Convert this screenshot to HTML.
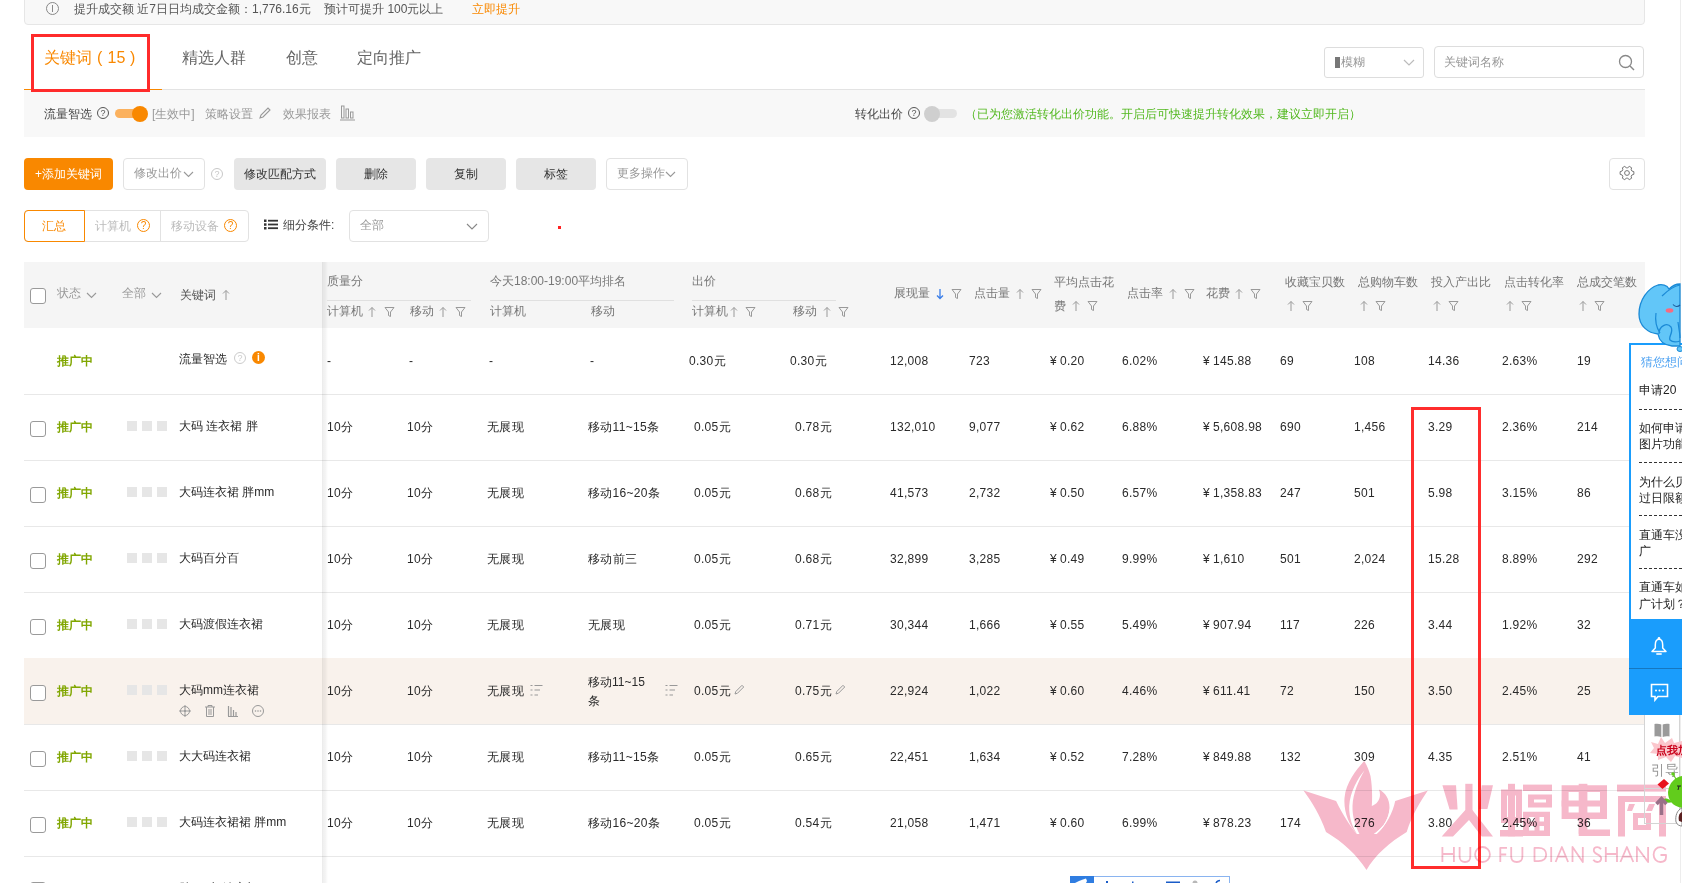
<!DOCTYPE html><html><head><meta charset="utf-8"><style>
*{margin:0;padding:0;box-sizing:border-box}
html,body{width:1682px;height:883px;overflow:hidden;background:#fff;font-family:"Liberation Sans",sans-serif;font-size:12px;color:#2a2a2a}
.t{position:absolute;white-space:nowrap;line-height:16px}
.b{position:absolute}
.g{color:#999}
.hg{color:#777}
.d{color:#666}
.or{color:#f98800}
.st{color:#80a600;font-weight:bold}
.chk{position:absolute;width:16px;height:16px;border:1px solid #9a9a9a;border-radius:3px;background:#fff}
.sq{position:absolute;width:10px;height:10px;background:#e6e6e6}
.hl{position:absolute;height:1px;background:#e8e8e8}
</style></head><body>

<div class="b" style="left:24px;top:-6px;width:1621px;height:31px;background:#f8f8f8;border:1px solid #e6e6e6;border-radius:4px"></div>
<div class="b" style="left:46px;top:2px;width:13px;height:13px;border:1px solid #888;border-radius:50%"></div>
<div class="b" style="left:52px;top:5px;width:1px;height:7px;background:#888"></div>
<div class="t " style="left:74px;top:1px;color:#555">提升成交额 近7日日均成交金额：1,776.16元&nbsp;&nbsp;&nbsp; 预计可提升 100元以上</div>
<div class="t or" style="left:472px;top:1px;">立即提升</div>
<div class="hl" style="left:24px;top:89px;width:1621px;background:#e3e3e3"></div>
<div class="b" style="left:24px;top:89px;width:138px;height:1px;background:#f98800"></div>
<div class="t or" style="left:44px;top:49px;font-size:16px;line-height:20px;top:48px">关键词</div>
<div class="t or" style="left:97px;top:49px;font-size:16px;line-height:20px;top:48px">(</div>
<div class="t or" style="left:107.5px;top:49px;font-size:16px;line-height:20px;top:48px">15</div>
<div class="t or" style="left:130px;top:49px;font-size:16px;line-height:20px;top:48px">)</div>
<div class="t d" style="left:182px;top:49px;font-size:16px;line-height:20px;top:48px">精选人群</div>
<div class="t d" style="left:286px;top:49px;font-size:16px;line-height:20px;top:48px">创意</div>
<div class="t d" style="left:357px;top:49px;font-size:16px;line-height:20px;top:48px">定向推广</div>
<div class="b" style="left:31px;top:34px;width:119px;height:58px;border:3px solid #ff2b2b;z-index:5"></div>
<div class="b" style="left:1324px;top:47px;width:100px;height:31px;border:1px solid #ddd;border-radius:3px;background:#fff"></div>
<div class="b" style="left:1335px;top:57px;width:5px;height:11px;background:#777"></div>
<div class="t g" style="left:1341px;top:54px;">模糊</div>
<svg class="b" style="left:1403px;top:59px" width="12" height="7" viewBox="0 0 12 7"><path d="M1 1 L6 6 L11 1" fill="none" stroke="#bbb" stroke-width="1.2"/></svg>
<div class="b" style="left:1434px;top:46px;width:210px;height:32px;border:1px solid #ddd;border-radius:4px;background:#fff"></div>
<div class="t g" style="left:1444px;top:54px;">关键词名称</div>
<svg class="b" style="left:1618px;top:54px" width="18" height="18" viewBox="0 0 18 18"><circle cx="7.5" cy="7.5" r="6" fill="none" stroke="#888" stroke-width="1.3"/><path d="M12 12 L16 16" stroke="#888" stroke-width="1.5"/></svg>
<div class="b" style="left:24px;top:90px;width:1621px;height:47px;background:#f8f8f8"></div>
<div class="t " style="left:44px;top:106px;color:#444">流量智选</div>
<div class="b" style="left:97px;top:107px;width:12px;height:12px;border:1px solid #555;border-radius:50%;font-size:9px;line-height:10px;text-align:center;color:#555">?</div>
<div class="b" style="left:115px;top:109px;width:26px;height:9px;background:#fbb15e;border-radius:5px"></div>
<div class="b" style="left:132px;top:106px;width:16px;height:16px;background:#f98800;border-radius:50%"></div>
<div class="t g" style="left:152px;top:106px;">[生效中]</div>
<div class="t g" style="left:205px;top:106px;">策略设置</div>
<svg class="b" style="left:258px;top:106px" width="14" height="14" viewBox="0 0 14 14"><path d="M2 12 L3 9 L10 2 L12 4 L5 11 Z" fill="none" stroke="#999" stroke-width="1.1"/></svg>
<div class="t g" style="left:283px;top:106px;">效果报表</div>
<svg class="b" style="left:340px;top:105px" width="16" height="16" viewBox="0 0 16 16"><rect x="1.5" y="1" width="2.5" height="12" fill="none" stroke="#999" stroke-width="1"/><rect x="6" y="4" width="2.5" height="9" fill="none" stroke="#999" stroke-width="1"/><rect x="10.5" y="7" width="2.5" height="6" fill="none" stroke="#999" stroke-width="1"/><path d="M0 15 H15" stroke="#999"/></svg>
<div class="t " style="left:855px;top:106px;color:#444">转化出价</div>
<div class="b" style="left:908px;top:107px;width:12px;height:12px;border:1px solid #555;border-radius:50%;font-size:9px;line-height:10px;text-align:center;color:#555">?</div>
<div class="b" style="left:926px;top:109px;width:31px;height:9px;background:#e3e3e3;border-radius:5px"></div>
<div class="b" style="left:924px;top:106px;width:16px;height:16px;background:#cfcfcf;border-radius:50%"></div>
<div class="t " style="left:965px;top:106px;color:#52b81f">（已为您激活转化出价功能。开启后可快速提升转化效果，建议立即开启）</div>
<div class="b" style="left:24px;top:158px;width:89px;height:32px;background:#f98800;border-radius:4px;color:#fff;text-align:center;line-height:32px">+添加关键词</div>
<div class="b" style="left:123px;top:158px;width:82px;height:32px;border:1px solid #e2e2e2;border-radius:4px;background:#fff"></div>
<div class="t g" style="left:134px;top:165px;">修改出价</div>
<svg class="b" style="left:183px;top:171px" width="11" height="7" viewBox="0 0 11 7"><path d="M1 1 L5.5 5.5 L10 1" fill="none" stroke="#999" stroke-width="1.1"/></svg>
<div class="b" style="left:211px;top:168px;width:12px;height:12px;border:1px solid #c8c8c8;border-radius:50%;font-size:9px;line-height:10px;text-align:center;color:#c8c8c8">?</div>
<div class="b" style="left:234px;top:158px;width:92px;height:32px;background:#e6e6e6;border-radius:4px;text-align:center;line-height:32px;color:#333">修改匹配方式</div>
<div class="b" style="left:336px;top:158px;width:80px;height:32px;background:#e6e6e6;border-radius:4px;text-align:center;line-height:32px;color:#333">删除</div>
<div class="b" style="left:426px;top:158px;width:80px;height:32px;background:#e6e6e6;border-radius:4px;text-align:center;line-height:32px;color:#333">复制</div>
<div class="b" style="left:516px;top:158px;width:80px;height:32px;background:#e6e6e6;border-radius:4px;text-align:center;line-height:32px;color:#333">标签</div>
<div class="b" style="left:606px;top:158px;width:82px;height:32px;border:1px solid #e2e2e2;border-radius:4px;background:#fff"></div>
<div class="t g" style="left:617px;top:165px;">更多操作</div>
<svg class="b" style="left:665px;top:171px" width="11" height="7" viewBox="0 0 11 7"><path d="M1 1 L5.5 5.5 L10 1" fill="none" stroke="#999" stroke-width="1.1"/></svg>
<div class="b" style="left:1609px;top:158px;width:36px;height:32px;border:1px solid #e2e2e2;border-radius:4px;background:#fff"></div>
<svg class="b" style="left:1619px;top:164.6px" width="16" height="16" viewBox="0 0 16 16"><path d="M12.91 6.01 L14.87 6.66 L14.87 9.34 L12.91 9.99 L12.18 11.26 L12.59 13.28 L10.28 14.62 L8.74 13.25 L7.26 13.25 L5.72 14.62 L3.41 13.28 L3.82 11.26 L3.09 9.99 L1.13 9.34 L1.13 6.66 L3.09 6.01 L3.82 4.74 L3.41 2.72 L5.72 1.38 L7.26 2.75 L8.74 2.75 L10.28 1.38 L12.59 2.72 L12.18 4.74 Z" fill="none" stroke="#777" stroke-width="1" stroke-linejoin="round"/><circle cx="8" cy="8" r="2.4" fill="none" stroke="#777" stroke-width="1"/></svg>
<div class="b" style="left:24px;top:210px;width:225px;height:32px;border:1px solid #e2e2e2;border-radius:4px;background:#fff"></div>
<div class="b" style="left:160px;top:211px;width:1px;height:30px;background:#e2e2e2"></div>
<div class="b" style="left:24px;top:210px;width:61px;height:32px;border:1px solid #f98800;border-radius:4px 0 0 4px"></div>
<div class="t or" style="left:42px;top:218px;">汇总</div>
<div class="t " style="left:95px;top:218px;color:#bbb">计算机</div>
<div class="b" style="left:137px;top:219px;width:13px;height:13px;border:1px solid #f98800;border-radius:50%;font-size:10px;line-height:11px;text-align:center;color:#f98800">?</div>
<div class="t " style="left:171px;top:218px;color:#bbb">移动设备</div>
<div class="b" style="left:224px;top:219px;width:13px;height:13px;border:1px solid #f98800;border-radius:50%;font-size:10px;line-height:11px;text-align:center;color:#f98800">?</div>
<svg class="b" style="left:264px;top:219px" width="14" height="11" viewBox="0 0 14 11"><rect x="0" y="0.5" width="2.5" height="2.5" fill="#333"/><rect x="0" y="4.3" width="2.5" height="2.5" fill="#333"/><rect x="0" y="8" width="2.5" height="2.5" fill="#333"/><rect x="4" y="0.8" width="10" height="1.8" fill="#333"/><rect x="4" y="4.6" width="10" height="1.8" fill="#333"/><rect x="4" y="8.3" width="10" height="1.8" fill="#333"/></svg>
<div class="t " style="left:283px;top:217px;color:#444">细分条件:</div>
<div class="b" style="left:349px;top:210px;width:140px;height:32px;border:1px solid #e2e2e2;border-radius:4px;background:#fff"></div>
<div class="t g" style="left:360px;top:217px;">全部</div>
<svg class="b" style="left:466px;top:223px" width="12" height="7" viewBox="0 0 12 7"><path d="M1 1 L6 6 L11 1" fill="none" stroke="#888" stroke-width="1.1"/></svg>
<div class="b" style="left:558px;top:226px;width:3px;height:3px;background:#ff2020"></div>
<div class="b" style="left:24px;top:262px;width:1621px;height:66px;background:#f5f5f5"></div>
<div class="chk" style="left:30px;top:288px"></div>
<div class="t g" style="left:57px;top:285px;">状态</div>
<svg class="b" style="left:86px;top:292px" width="11" height="7" viewBox="0 0 11 7"><path d="M1 1 L5.5 5.5 L10 1" fill="none" stroke="#999" stroke-width="1.1"/></svg>
<div class="t g" style="left:122px;top:285px;">全部</div>
<svg class="b" style="left:151px;top:292px" width="11" height="7" viewBox="0 0 11 7"><path d="M1 1 L5.5 5.5 L10 1" fill="none" stroke="#999" stroke-width="1.1"/></svg>
<div class="t " style="left:180px;top:287px;color:#555">关键词</div>
<svg class="b" style="left:222px;top:289px" width="8" height="12" viewBox="0 0 8 12"><path d="M4 11 V1.5 M1 4.5 L4 1.5 L7 4.5" fill="none" stroke="#999" stroke-width="1"/></svg>
<div class="t hg" style="left:327px;top:273px;">质量分</div>
<div class="hl" style="left:327px;top:300px;width:144px;background:#e0e0e0"></div>
<div class="t hg" style="left:490px;top:273px;">今天18:00-19:00平均排名</div>
<div class="hl" style="left:490px;top:300px;width:184px;background:#e0e0e0"></div>
<div class="t hg" style="left:692px;top:273px;">出价</div>
<div class="hl" style="left:692px;top:300px;width:144px;background:#e0e0e0"></div>
<div class="t hg" style="left:327px;top:303px;">计算机</div>
<svg class="b" style="left:368px;top:306px" width="8" height="12" viewBox="0 0 8 12"><path d="M4 11 V1.5 M1 4.5 L4 1.5 L7 4.5" fill="none" stroke="#999" stroke-width="1"/></svg>
<svg class="b" style="left:384px;top:306px" width="11" height="12" viewBox="0 0 11 12"><path d="M1 1.5 H10 L6.5 6 V10.5 L4.5 9.5 V6 Z" fill="none" stroke="#999" stroke-width="1"/></svg>
<div class="t hg" style="left:410px;top:303px;">移动</div>
<svg class="b" style="left:439px;top:306px" width="8" height="12" viewBox="0 0 8 12"><path d="M4 11 V1.5 M1 4.5 L4 1.5 L7 4.5" fill="none" stroke="#999" stroke-width="1"/></svg>
<svg class="b" style="left:455px;top:306px" width="11" height="12" viewBox="0 0 11 12"><path d="M1 1.5 H10 L6.5 6 V10.5 L4.5 9.5 V6 Z" fill="none" stroke="#999" stroke-width="1"/></svg>
<div class="t hg" style="left:490px;top:303px;">计算机</div>
<div class="t hg" style="left:591px;top:303px;">移动</div>
<div class="t hg" style="left:692px;top:303px;">计算机</div>
<svg class="b" style="left:730px;top:306px" width="8" height="12" viewBox="0 0 8 12"><path d="M4 11 V1.5 M1 4.5 L4 1.5 L7 4.5" fill="none" stroke="#999" stroke-width="1"/></svg>
<svg class="b" style="left:745px;top:306px" width="11" height="12" viewBox="0 0 11 12"><path d="M1 1.5 H10 L6.5 6 V10.5 L4.5 9.5 V6 Z" fill="none" stroke="#999" stroke-width="1"/></svg>
<div class="t hg" style="left:793px;top:303px;">移动</div>
<svg class="b" style="left:823px;top:306px" width="8" height="12" viewBox="0 0 8 12"><path d="M4 11 V1.5 M1 4.5 L4 1.5 L7 4.5" fill="none" stroke="#999" stroke-width="1"/></svg>
<svg class="b" style="left:838px;top:306px" width="11" height="12" viewBox="0 0 11 12"><path d="M1 1.5 H10 L6.5 6 V10.5 L4.5 9.5 V6 Z" fill="none" stroke="#999" stroke-width="1"/></svg>
<div class="t hg" style="left:894px;top:285px;">展现量</div>
<svg class="b" style="left:936px;top:288px" width="8" height="12" viewBox="0 0 8 12"><path d="M4 1 V10.5 M1 7.5 L4 10.5 L7 7.5" fill="none" stroke="#3a7ee8" stroke-width="1.3"/></svg>
<svg class="b" style="left:951px;top:288px" width="11" height="12" viewBox="0 0 11 12"><path d="M1 1.5 H10 L6.5 6 V10.5 L4.5 9.5 V6 Z" fill="none" stroke="#999" stroke-width="1"/></svg>
<div class="t hg" style="left:974px;top:285px;">点击量</div>
<svg class="b" style="left:1016px;top:288px" width="8" height="12" viewBox="0 0 8 12"><path d="M4 11 V1.5 M1 4.5 L4 1.5 L7 4.5" fill="none" stroke="#999" stroke-width="1"/></svg>
<svg class="b" style="left:1031px;top:288px" width="11" height="12" viewBox="0 0 11 12"><path d="M1 1.5 H10 L6.5 6 V10.5 L4.5 9.5 V6 Z" fill="none" stroke="#999" stroke-width="1"/></svg>
<div class="t hg" style="left:1054px;top:274px;">平均点击花</div>
<div class="t hg" style="left:1054px;top:298px;">费</div>
<svg class="b" style="left:1072px;top:300px" width="8" height="12" viewBox="0 0 8 12"><path d="M4 11 V1.5 M1 4.5 L4 1.5 L7 4.5" fill="none" stroke="#999" stroke-width="1"/></svg>
<svg class="b" style="left:1087px;top:300px" width="11" height="12" viewBox="0 0 11 12"><path d="M1 1.5 H10 L6.5 6 V10.5 L4.5 9.5 V6 Z" fill="none" stroke="#999" stroke-width="1"/></svg>
<div class="t hg" style="left:1127px;top:285px;">点击率</div>
<svg class="b" style="left:1169px;top:288px" width="8" height="12" viewBox="0 0 8 12"><path d="M4 11 V1.5 M1 4.5 L4 1.5 L7 4.5" fill="none" stroke="#999" stroke-width="1"/></svg>
<svg class="b" style="left:1184px;top:288px" width="11" height="12" viewBox="0 0 11 12"><path d="M1 1.5 H10 L6.5 6 V10.5 L4.5 9.5 V6 Z" fill="none" stroke="#999" stroke-width="1"/></svg>
<div class="t hg" style="left:1206px;top:285px;">花费</div>
<svg class="b" style="left:1235px;top:288px" width="8" height="12" viewBox="0 0 8 12"><path d="M4 11 V1.5 M1 4.5 L4 1.5 L7 4.5" fill="none" stroke="#999" stroke-width="1"/></svg>
<svg class="b" style="left:1250px;top:288px" width="11" height="12" viewBox="0 0 11 12"><path d="M1 1.5 H10 L6.5 6 V10.5 L4.5 9.5 V6 Z" fill="none" stroke="#999" stroke-width="1"/></svg>
<div class="t hg" style="left:1285px;top:274px;">收藏宝贝数</div>
<svg class="b" style="left:1287px;top:300px" width="8" height="12" viewBox="0 0 8 12"><path d="M4 11 V1.5 M1 4.5 L4 1.5 L7 4.5" fill="none" stroke="#999" stroke-width="1"/></svg>
<svg class="b" style="left:1302px;top:300px" width="11" height="12" viewBox="0 0 11 12"><path d="M1 1.5 H10 L6.5 6 V10.5 L4.5 9.5 V6 Z" fill="none" stroke="#999" stroke-width="1"/></svg>
<div class="t hg" style="left:1358px;top:274px;">总购物车数</div>
<svg class="b" style="left:1360px;top:300px" width="8" height="12" viewBox="0 0 8 12"><path d="M4 11 V1.5 M1 4.5 L4 1.5 L7 4.5" fill="none" stroke="#999" stroke-width="1"/></svg>
<svg class="b" style="left:1375px;top:300px" width="11" height="12" viewBox="0 0 11 12"><path d="M1 1.5 H10 L6.5 6 V10.5 L4.5 9.5 V6 Z" fill="none" stroke="#999" stroke-width="1"/></svg>
<div class="t hg" style="left:1431px;top:274px;">投入产出比</div>
<svg class="b" style="left:1433px;top:300px" width="8" height="12" viewBox="0 0 8 12"><path d="M4 11 V1.5 M1 4.5 L4 1.5 L7 4.5" fill="none" stroke="#999" stroke-width="1"/></svg>
<svg class="b" style="left:1448px;top:300px" width="11" height="12" viewBox="0 0 11 12"><path d="M1 1.5 H10 L6.5 6 V10.5 L4.5 9.5 V6 Z" fill="none" stroke="#999" stroke-width="1"/></svg>
<div class="t hg" style="left:1504px;top:274px;">点击转化率</div>
<svg class="b" style="left:1506px;top:300px" width="8" height="12" viewBox="0 0 8 12"><path d="M4 11 V1.5 M1 4.5 L4 1.5 L7 4.5" fill="none" stroke="#999" stroke-width="1"/></svg>
<svg class="b" style="left:1521px;top:300px" width="11" height="12" viewBox="0 0 11 12"><path d="M1 1.5 H10 L6.5 6 V10.5 L4.5 9.5 V6 Z" fill="none" stroke="#999" stroke-width="1"/></svg>
<div class="t hg" style="left:1577px;top:274px;">总成交笔数</div>
<svg class="b" style="left:1579px;top:300px" width="8" height="12" viewBox="0 0 8 12"><path d="M4 11 V1.5 M1 4.5 L4 1.5 L7 4.5" fill="none" stroke="#999" stroke-width="1"/></svg>
<svg class="b" style="left:1594px;top:300px" width="11" height="12" viewBox="0 0 11 12"><path d="M1 1.5 H10 L6.5 6 V10.5 L4.5 9.5 V6 Z" fill="none" stroke="#999" stroke-width="1"/></svg>
<div class="hl" style="left:24px;top:394px;width:1621px"></div>
<div class="t st" style="left:57px;top:353px;">推广中</div>
<div class="t " style="left:179px;top:351px;">流量智选</div>
<div class="b" style="left:234px;top:352px;width:12px;height:12px;border:1px solid #ccc;border-radius:50%;font-size:9px;line-height:10px;text-align:center;color:#ccc">?</div>
<div class="b" style="left:252px;top:351px;width:13px;height:13px;background:#f98800;border-radius:50%;color:#fff;font-size:10px;line-height:13px;text-align:center;font-weight:bold">i</div>
<div class="t " style="left:327px;top:353px;letter-spacing:0.3px">-</div>
<div class="t " style="left:409px;top:353px;letter-spacing:0.3px">-</div>
<div class="t " style="left:489px;top:353px;letter-spacing:0.3px">-</div>
<div class="t " style="left:590px;top:353px;letter-spacing:0.3px">-</div>
<div class="t " style="left:689px;top:353px;letter-spacing:0.3px">0.30元</div>
<div class="t " style="left:790px;top:353px;letter-spacing:0.3px">0.30元</div>
<div class="t " style="left:890px;top:353px;letter-spacing:0.3px">12,008</div>
<div class="t " style="left:969px;top:353px;letter-spacing:0.3px">723</div>
<div class="t " style="left:1050px;top:353px;letter-spacing:0.3px"><span style="margin-right:3px">¥</span>0.20</div>
<div class="t " style="left:1122px;top:353px;letter-spacing:0.3px">6.02%</div>
<div class="t " style="left:1203px;top:353px;letter-spacing:0.3px"><span style="margin-right:3px">¥</span>145.88</div>
<div class="t " style="left:1280px;top:353px;letter-spacing:0.3px">69</div>
<div class="t " style="left:1354px;top:353px;letter-spacing:0.3px">108</div>
<div class="t " style="left:1428px;top:353px;letter-spacing:0.3px">14.36</div>
<div class="t " style="left:1502px;top:353px;letter-spacing:0.3px">2.63%</div>
<div class="t " style="left:1577px;top:353px;letter-spacing:0.3px">19</div>
<div class="hl" style="left:24px;top:460px;width:1621px"></div>
<div class="chk" style="left:30px;top:421px"></div>
<div class="t st" style="left:57px;top:419px;">推广中</div>
<div class="sq" style="left:127px;top:421px"></div>
<div class="sq" style="left:142px;top:421px"></div>
<div class="sq" style="left:157px;top:421px"></div>
<div class="t " style="left:179px;top:418px;">大码 连衣裙 胖</div>
<div class="t " style="left:327px;top:419px;letter-spacing:0.3px">10分</div>
<div class="t " style="left:407px;top:419px;letter-spacing:0.3px">10分</div>
<div class="t " style="left:487px;top:419px;letter-spacing:0.3px">无展现</div>
<div class="t " style="left:588px;top:419px;letter-spacing:0.3px">移动11~15条</div>
<div class="t " style="left:694px;top:419px;letter-spacing:0.3px">0.05元</div>
<div class="t " style="left:795px;top:419px;letter-spacing:0.3px">0.78元</div>
<div class="t " style="left:890px;top:419px;letter-spacing:0.3px">132,010</div>
<div class="t " style="left:969px;top:419px;letter-spacing:0.3px">9,077</div>
<div class="t " style="left:1050px;top:419px;letter-spacing:0.3px"><span style="margin-right:3px">¥</span>0.62</div>
<div class="t " style="left:1122px;top:419px;letter-spacing:0.3px">6.88%</div>
<div class="t " style="left:1203px;top:419px;letter-spacing:0.3px"><span style="margin-right:3px">¥</span>5,608.98</div>
<div class="t " style="left:1280px;top:419px;letter-spacing:0.3px">690</div>
<div class="t " style="left:1354px;top:419px;letter-spacing:0.3px">1,456</div>
<div class="t " style="left:1428px;top:419px;letter-spacing:0.3px">3.29</div>
<div class="t " style="left:1502px;top:419px;letter-spacing:0.3px">2.36%</div>
<div class="t " style="left:1577px;top:419px;letter-spacing:0.3px">214</div>
<div class="hl" style="left:24px;top:526px;width:1621px"></div>
<div class="chk" style="left:30px;top:487px"></div>
<div class="t st" style="left:57px;top:485px;">推广中</div>
<div class="sq" style="left:127px;top:487px"></div>
<div class="sq" style="left:142px;top:487px"></div>
<div class="sq" style="left:157px;top:487px"></div>
<div class="t " style="left:179px;top:484px;">大码连衣裙 胖mm</div>
<div class="t " style="left:327px;top:485px;letter-spacing:0.3px">10分</div>
<div class="t " style="left:407px;top:485px;letter-spacing:0.3px">10分</div>
<div class="t " style="left:487px;top:485px;letter-spacing:0.3px">无展现</div>
<div class="t " style="left:588px;top:485px;letter-spacing:0.3px">移动16~20条</div>
<div class="t " style="left:694px;top:485px;letter-spacing:0.3px">0.05元</div>
<div class="t " style="left:795px;top:485px;letter-spacing:0.3px">0.68元</div>
<div class="t " style="left:890px;top:485px;letter-spacing:0.3px">41,573</div>
<div class="t " style="left:969px;top:485px;letter-spacing:0.3px">2,732</div>
<div class="t " style="left:1050px;top:485px;letter-spacing:0.3px"><span style="margin-right:3px">¥</span>0.50</div>
<div class="t " style="left:1122px;top:485px;letter-spacing:0.3px">6.57%</div>
<div class="t " style="left:1203px;top:485px;letter-spacing:0.3px"><span style="margin-right:3px">¥</span>1,358.83</div>
<div class="t " style="left:1280px;top:485px;letter-spacing:0.3px">247</div>
<div class="t " style="left:1354px;top:485px;letter-spacing:0.3px">501</div>
<div class="t " style="left:1428px;top:485px;letter-spacing:0.3px">5.98</div>
<div class="t " style="left:1502px;top:485px;letter-spacing:0.3px">3.15%</div>
<div class="t " style="left:1577px;top:485px;letter-spacing:0.3px">86</div>
<div class="hl" style="left:24px;top:592px;width:1621px"></div>
<div class="chk" style="left:30px;top:553px"></div>
<div class="t st" style="left:57px;top:551px;">推广中</div>
<div class="sq" style="left:127px;top:553px"></div>
<div class="sq" style="left:142px;top:553px"></div>
<div class="sq" style="left:157px;top:553px"></div>
<div class="t " style="left:179px;top:550px;">大码百分百</div>
<div class="t " style="left:327px;top:551px;letter-spacing:0.3px">10分</div>
<div class="t " style="left:407px;top:551px;letter-spacing:0.3px">10分</div>
<div class="t " style="left:487px;top:551px;letter-spacing:0.3px">无展现</div>
<div class="t " style="left:588px;top:551px;letter-spacing:0.3px">移动前三</div>
<div class="t " style="left:694px;top:551px;letter-spacing:0.3px">0.05元</div>
<div class="t " style="left:795px;top:551px;letter-spacing:0.3px">0.68元</div>
<div class="t " style="left:890px;top:551px;letter-spacing:0.3px">32,899</div>
<div class="t " style="left:969px;top:551px;letter-spacing:0.3px">3,285</div>
<div class="t " style="left:1050px;top:551px;letter-spacing:0.3px"><span style="margin-right:3px">¥</span>0.49</div>
<div class="t " style="left:1122px;top:551px;letter-spacing:0.3px">9.99%</div>
<div class="t " style="left:1203px;top:551px;letter-spacing:0.3px"><span style="margin-right:3px">¥</span>1,610</div>
<div class="t " style="left:1280px;top:551px;letter-spacing:0.3px">501</div>
<div class="t " style="left:1354px;top:551px;letter-spacing:0.3px">2,024</div>
<div class="t " style="left:1428px;top:551px;letter-spacing:0.3px">15.28</div>
<div class="t " style="left:1502px;top:551px;letter-spacing:0.3px">8.89%</div>
<div class="t " style="left:1577px;top:551px;letter-spacing:0.3px">292</div>
<div class="hl" style="left:24px;top:658px;width:1621px"></div>
<div class="chk" style="left:30px;top:619px"></div>
<div class="t st" style="left:57px;top:617px;">推广中</div>
<div class="sq" style="left:127px;top:619px"></div>
<div class="sq" style="left:142px;top:619px"></div>
<div class="sq" style="left:157px;top:619px"></div>
<div class="t " style="left:179px;top:616px;">大码渡假连衣裙</div>
<div class="t " style="left:327px;top:617px;letter-spacing:0.3px">10分</div>
<div class="t " style="left:407px;top:617px;letter-spacing:0.3px">10分</div>
<div class="t " style="left:487px;top:617px;letter-spacing:0.3px">无展现</div>
<div class="t " style="left:588px;top:617px;letter-spacing:0.3px">无展现</div>
<div class="t " style="left:694px;top:617px;letter-spacing:0.3px">0.05元</div>
<div class="t " style="left:795px;top:617px;letter-spacing:0.3px">0.71元</div>
<div class="t " style="left:890px;top:617px;letter-spacing:0.3px">30,344</div>
<div class="t " style="left:969px;top:617px;letter-spacing:0.3px">1,666</div>
<div class="t " style="left:1050px;top:617px;letter-spacing:0.3px"><span style="margin-right:3px">¥</span>0.55</div>
<div class="t " style="left:1122px;top:617px;letter-spacing:0.3px">5.49%</div>
<div class="t " style="left:1203px;top:617px;letter-spacing:0.3px"><span style="margin-right:3px">¥</span>907.94</div>
<div class="t " style="left:1280px;top:617px;letter-spacing:0.3px">117</div>
<div class="t " style="left:1354px;top:617px;letter-spacing:0.3px">226</div>
<div class="t " style="left:1428px;top:617px;letter-spacing:0.3px">3.44</div>
<div class="t " style="left:1502px;top:617px;letter-spacing:0.3px">1.92%</div>
<div class="t " style="left:1577px;top:617px;letter-spacing:0.3px">32</div>
<div class="b" style="left:24px;top:658px;width:1621px;height:66px;background:#f9f2ec"></div>
<div class="hl" style="left:24px;top:724px;width:1621px"></div>
<div class="chk" style="left:30px;top:685px"></div>
<div class="t st" style="left:57px;top:683px;">推广中</div>
<div class="sq" style="left:127px;top:685px"></div>
<div class="sq" style="left:142px;top:685px"></div>
<div class="sq" style="left:157px;top:685px"></div>
<div class="t " style="left:179px;top:682px;">大码mm连衣裙</div>
<div class="t " style="left:327px;top:683px;letter-spacing:0.3px">10分</div>
<div class="t " style="left:407px;top:683px;letter-spacing:0.3px">10分</div>
<div class="t " style="left:487px;top:683px;letter-spacing:0.3px">无展现</div>
<div class="t" style="left:588px;top:673px;line-height:19px">移动11~15<br>条</div>
<div class="t " style="left:694px;top:683px;letter-spacing:0.3px">0.05元</div>
<div class="t " style="left:795px;top:683px;letter-spacing:0.3px">0.75元</div>
<div class="t " style="left:890px;top:683px;letter-spacing:0.3px">22,924</div>
<div class="t " style="left:969px;top:683px;letter-spacing:0.3px">1,022</div>
<div class="t " style="left:1050px;top:683px;letter-spacing:0.3px"><span style="margin-right:3px">¥</span>0.60</div>
<div class="t " style="left:1122px;top:683px;letter-spacing:0.3px">4.46%</div>
<div class="t " style="left:1203px;top:683px;letter-spacing:0.3px"><span style="margin-right:3px">¥</span>611.41</div>
<div class="t " style="left:1280px;top:683px;letter-spacing:0.3px">72</div>
<div class="t " style="left:1354px;top:683px;letter-spacing:0.3px">150</div>
<div class="t " style="left:1428px;top:683px;letter-spacing:0.3px">3.50</div>
<div class="t " style="left:1502px;top:683px;letter-spacing:0.3px">2.45%</div>
<div class="t " style="left:1577px;top:683px;letter-spacing:0.3px">25</div>
<svg class="b" style="left:179px;top:704px" width="90" height="14" viewBox="0 0 90 14"><circle cx="6" cy="7" r="4.5" fill="none" stroke="#999"/><path d="M6 1 V13 M0 7 H12" stroke="#999"/><circle cx="6" cy="7" r="1" fill="#999"/><path d="M26 3 H36 M29 3 V1.5 H33 V3 M27.5 3 V12.5 H34.5 V3 M30 5 V11 M32 5 V11" fill="none" stroke="#999"/><path d="M49.5 2 V12 M52 3 V12 M54.5 6 V12 M57 8 V12 M49 12.5 H59" fill="none" stroke="#999" stroke-width="1.2"/><circle cx="79" cy="7" r="5.5" fill="none" stroke="#999"/><circle cx="76.5" cy="7" r="0.8" fill="#999"/><circle cx="79" cy="7" r="0.8" fill="#999"/><circle cx="81.5" cy="7" r="0.8" fill="#999"/></svg>
<svg class="b" style="left:530px;top:684px" width="13" height="14" viewBox="0 0 13 14"><path d="M0.5 1.5 H2.5 M0.5 6 H2.5 M0.5 11 H2.5 M4.5 1.5 H12.5 M4.5 6 H10 M4.5 11 H8" fill="none" stroke="#999" stroke-width="1"/></svg>
<svg class="b" style="left:665px;top:684px" width="13" height="14" viewBox="0 0 13 14"><path d="M0.5 1.5 H2.5 M0.5 6 H2.5 M0.5 11 H2.5 M4.5 1.5 H12.5 M4.5 6 H10 M4.5 11 H8" fill="none" stroke="#999" stroke-width="1"/></svg>
<svg class="b" style="left:734px;top:684px" width="11" height="11" viewBox="0 0 11 11"><path d="M1 10 L1.8 7.5 L8 1.3 L9.7 3 L3.5 9.2 Z" fill="none" stroke="#999" stroke-width="1"/></svg>
<svg class="b" style="left:835px;top:684px" width="11" height="11" viewBox="0 0 11 11"><path d="M1 10 L1.8 7.5 L8 1.3 L9.7 3 L3.5 9.2 Z" fill="none" stroke="#999" stroke-width="1"/></svg>
<div class="hl" style="left:24px;top:790px;width:1621px"></div>
<div class="chk" style="left:30px;top:751px"></div>
<div class="t st" style="left:57px;top:749px;">推广中</div>
<div class="sq" style="left:127px;top:751px"></div>
<div class="sq" style="left:142px;top:751px"></div>
<div class="sq" style="left:157px;top:751px"></div>
<div class="t " style="left:179px;top:748px;">大大码连衣裙</div>
<div class="t " style="left:327px;top:749px;letter-spacing:0.3px">10分</div>
<div class="t " style="left:407px;top:749px;letter-spacing:0.3px">10分</div>
<div class="t " style="left:487px;top:749px;letter-spacing:0.3px">无展现</div>
<div class="t " style="left:588px;top:749px;letter-spacing:0.3px">移动11~15条</div>
<div class="t " style="left:694px;top:749px;letter-spacing:0.3px">0.05元</div>
<div class="t " style="left:795px;top:749px;letter-spacing:0.3px">0.65元</div>
<div class="t " style="left:890px;top:749px;letter-spacing:0.3px">22,451</div>
<div class="t " style="left:969px;top:749px;letter-spacing:0.3px">1,634</div>
<div class="t " style="left:1050px;top:749px;letter-spacing:0.3px"><span style="margin-right:3px">¥</span>0.52</div>
<div class="t " style="left:1122px;top:749px;letter-spacing:0.3px">7.28%</div>
<div class="t " style="left:1203px;top:749px;letter-spacing:0.3px"><span style="margin-right:3px">¥</span>849.88</div>
<div class="t " style="left:1280px;top:749px;letter-spacing:0.3px">132</div>
<div class="t " style="left:1354px;top:749px;letter-spacing:0.3px">309</div>
<div class="t " style="left:1428px;top:749px;letter-spacing:0.3px">4.35</div>
<div class="t " style="left:1502px;top:749px;letter-spacing:0.3px">2.51%</div>
<div class="t " style="left:1577px;top:749px;letter-spacing:0.3px">41</div>
<div class="hl" style="left:24px;top:856px;width:1621px"></div>
<div class="chk" style="left:30px;top:817px"></div>
<div class="t st" style="left:57px;top:815px;">推广中</div>
<div class="sq" style="left:127px;top:817px"></div>
<div class="sq" style="left:142px;top:817px"></div>
<div class="sq" style="left:157px;top:817px"></div>
<div class="t " style="left:179px;top:814px;">大码连衣裙裙 胖mm</div>
<div class="t " style="left:327px;top:815px;letter-spacing:0.3px">10分</div>
<div class="t " style="left:407px;top:815px;letter-spacing:0.3px">10分</div>
<div class="t " style="left:487px;top:815px;letter-spacing:0.3px">无展现</div>
<div class="t " style="left:588px;top:815px;letter-spacing:0.3px">移动16~20条</div>
<div class="t " style="left:694px;top:815px;letter-spacing:0.3px">0.05元</div>
<div class="t " style="left:795px;top:815px;letter-spacing:0.3px">0.54元</div>
<div class="t " style="left:890px;top:815px;letter-spacing:0.3px">21,058</div>
<div class="t " style="left:969px;top:815px;letter-spacing:0.3px">1,471</div>
<div class="t " style="left:1050px;top:815px;letter-spacing:0.3px"><span style="margin-right:3px">¥</span>0.60</div>
<div class="t " style="left:1122px;top:815px;letter-spacing:0.3px">6.99%</div>
<div class="t " style="left:1203px;top:815px;letter-spacing:0.3px"><span style="margin-right:3px">¥</span>878.23</div>
<div class="t " style="left:1280px;top:815px;letter-spacing:0.3px">174</div>
<div class="t " style="left:1354px;top:815px;letter-spacing:0.3px">276</div>
<div class="t " style="left:1428px;top:815px;letter-spacing:0.3px">3.80</div>
<div class="t " style="left:1502px;top:815px;letter-spacing:0.3px">2.45%</div>
<div class="t " style="left:1577px;top:815px;letter-spacing:0.3px">36</div>
<div class="hl" style="left:24px;top:922px;width:1621px"></div>
<div class="chk" style="left:30px;top:883px"></div>
<div class="sq" style="left:127px;top:883px"></div>
<div class="sq" style="left:142px;top:883px"></div>
<div class="sq" style="left:157px;top:883px"></div>
<div class="t " style="left:179px;top:880px;">胖mm裙连衣裙</div>
<div class="b" style="left:322px;top:262px;width:1px;height:621px;background:rgba(0,0,0,0.075)"></div>
<div class="b" style="left:323px;top:262px;width:5px;height:621px;background:linear-gradient(90deg,rgba(0,0,0,0.06),rgba(0,0,0,0.05) 40%,rgba(0,0,0,0))"></div>
<div class="b" style="left:1411px;top:407px;width:70px;height:462px;border:3px solid #ff2d2d"></div>
<svg class="b" style="left:1290px;top:750px;mix-blend-mode:multiply" width="150" height="133" viewBox="1290 750 150 133"><g fill="#f6b8ca"><path d="M1303.5 790.5 L1336.1 800.9 C1343 815 1350 826 1357 834 L1376.5 834 C1386 826 1393 812 1395.2 800.9 L1427.8 790.5 C1420 802 1412 815 1406.7 832 C1390 842 1375 855 1366.5 870 C1357 855 1343 842 1326 832 C1320 815 1312 802 1303.5 790.5 Z"/><path d="M1364.1 761.1 C1357 769 1346 782 1344.5 798 C1343.5 812 1349 825 1357 834 L1374 834 C1381 829 1388 822 1389.4 810 C1390.2 800 1386 793 1378.9 789.6 C1382 797 1378 804 1371.8 806 C1372.5 795 1372 785 1370.5 776 C1369 770 1366.5 764 1364.1 761.1 Z"/></g><path d="M1364.6 770.3 C1358 778 1350 792 1349.2 806 C1348.8 818 1353 828 1357 834 L1359.5 834 C1355.5 826 1352.2 817 1352.5 806 C1353 793 1359 780 1364.6 770.3 Z" fill="#fff"/><path d="M1391.5 804 C1390 818 1384 828 1376.5 834 L1374 834 C1381 829 1388 822 1389.4 810 Z" fill="#fff"/></svg>
<svg class="b" style="left:1436px;top:776px;mix-blend-mode:multiply" width="246" height="95" viewBox="0 0 246 95"><g fill="#f6b8ca"><path d="M6.4 9.3 H20 L21.6 33.5 H13.6 Z"/><rect x="29.3" y="7.8" width="7.2" height="28"/><path d="M45.7 9.3 H57 L51.4 33 H42.8 Z"/><path d="M29.3 34 H36.4 L57 60.6 H45.7 L33 44 L17 60.6 H5.7 Z"/><rect x="72" y="7.8" width="7" height="52.5"/><rect x="64" y="54" width="23" height="6.5"/><path d="M65 13.6 H86 V47 H65 Z M71 19.6 V41 H80 V19.6 Z" fill-rule="evenodd"/><rect x="87" y="8.6" width="29" height="6.4"/><path d="M92 18.5 H116 V31.4 H92 Z M98 23.5 V26.4 H110 V23.5 Z" fill-rule="evenodd"/><path d="M87 35.7 H114 V60 H87 Z M93 41 V54.5 H108 V41 Z" fill-rule="evenodd"/><rect x="98.5" y="36" width="5" height="24"/><rect x="87" y="45.5" width="27" height="4.5"/><path d="M125.6 9.3 H171 V43 H125.6 Z M132.6 16 V36.5 H164 V16 Z" fill-rule="evenodd"/><rect x="125.6" y="24.5" width="45.4" height="6"/><rect x="142.7" y="7.8" width="8.7" height="50"/><rect x="142.7" y="53.5" width="31.3" height="6.5"/><rect x="181" y="8.6" width="49" height="7"/><path d="M182 20 H230 V60.5 H223 V26 H189 V60.5 H182 Z"/><path d="M193 28 L199 28 L196 35 L191 35 Z M213 28 L219 28 L216 35 L210 35 Z"/><path d="M197 37 H215 V54 H197 Z M202 42 V49 H210 V42 Z" fill-rule="evenodd"/></g><g fill="none" stroke="#f6b8ca" stroke-width="1.8" stroke-linejoin="round"><path d="M6.4 71 V86 M17.9 71 V86 M6.4 78 H17.9"/><path d="M23.6 71 V80.5 C23.6 84 26 86 29 86 C32 86 34.3 84 34.3 80.5 V71"/><ellipse cx="46.5" cy="78.5" rx="7.4" ry="7.5"/><path d="M71 71.9 H64.3 V86 M64.3 78.5 H70.2"/><path d="M75.2 71 V80.5 C75.2 84 77.6 86 80.8 86 C84 86 86.4 84 86.4 80.5 V71"/><path d="M98.5 71.9 V85.1 H102.5 C107.5 85.1 110.2 82.3 110.2 78.5 C110.2 74.7 107.5 71.9 102.5 71.9 Z"/><path d="M115.2 71 V86"/><path d="M119.6 86 L125.9 71 L132.1 86 M121.8 80.6 H130"/><path d="M136.5 86 V71 L146.8 86 V71"/><path d="M165 73.3 C164 71.9 162.7 71.2 161.3 71.2 C159 71.2 157.8 72.6 157.8 74.5 C157.8 79 165.2 77.6 165.2 82.3 C165.2 84.6 163.5 86 161.2 86 C159.6 86 158.2 85.2 157.3 83.8"/><path d="M169.8 71 V86 M181 71 V86 M169.8 78 H181"/><path d="M184.4 86 L190.9 71 L197.3 86 M186.6 80.6 H195"/><path d="M200.9 86 V71 L212.1 86 V71"/><path d="M229.8 73.6 C228.4 72 226.4 71.2 224.5 71.2 C220.3 71.2 217.6 74.5 217.6 78.6 C217.6 82.8 220.5 86 224.5 86 C227.8 86 230 84 230 81 V79 H224.5"/></g></svg>
<div class="b" style="left:1680px;top:0;width:1px;height:883px;background:#ededed"></div>
<div class="b" style="left:1629px;top:343px;width:53px;height:278px;background:#fff;border:2px solid #1a9dfc;border-right:none"></div>
<div class="t " style="left:1641px;top:354px;color:#4aa0f2">猜您想问</div>
<div class="t " style="left:1639px;top:382px;color:#222">申请20</div>
<div class="t " style="left:1639px;top:420px;color:#222">如何申请</div>
<div class="t " style="left:1639px;top:436px;color:#222">图片功能</div>
<div class="t " style="left:1639px;top:474px;color:#222">为什么贝</div>
<div class="t " style="left:1639px;top:490px;color:#222">过日限额</div>
<div class="t " style="left:1639px;top:527px;color:#222">直通车没</div>
<div class="t " style="left:1639px;top:543px;color:#222">广</div>
<div class="t " style="left:1639px;top:579px;color:#222">直通车如</div>
<div class="t " style="left:1639px;top:596px;color:#222">广计划？</div>
<div class="b" style="left:1639px;top:409px;width:43px;height:0;border-top:1px dashed #333"></div>
<div class="b" style="left:1639px;top:462px;width:43px;height:0;border-top:1px dashed #333"></div>
<div class="b" style="left:1639px;top:515px;width:43px;height:0;border-top:1px dashed #333"></div>
<div class="b" style="left:1639px;top:568px;width:43px;height:0;border-top:1px dashed #333"></div>
<div class="b" style="left:1629px;top:621px;width:53px;height:47px;background:#1a9dfc"></div>
<div class="b" style="left:1629px;top:668px;width:53px;height:1px;background:#1577c0"></div>
<div class="b" style="left:1629px;top:669px;width:53px;height:46px;background:#1a9dfc"></div>
<svg class="b" style="left:1650px;top:636px" width="18" height="20" viewBox="0 0 18 20"><path d="M9 3.2 C6.5 3.2 5.3 5.5 5.3 9 V12 L2 15.5 H16 L12.7 12 V9 C12.7 5.5 11.5 3.2 9 3.2 Z" fill="none" stroke="#fff" stroke-width="1.5" stroke-linejoin="round"/><circle cx="9" cy="2.2" r="1.3" fill="#fff"/><path d="M6.3 18 H11.7" stroke="#fff" stroke-width="1.6"/></svg>
<svg class="b" style="left:1650px;top:683px" width="19" height="19" viewBox="0 0 19 19"><path d="M1.5 1.5 H17.5 V13.5 H8 L5 17 V13.5 H1.5 Z" fill="none" stroke="#fff" stroke-width="1.6"/><circle cx="6" cy="7.5" r="1" fill="#fff"/><circle cx="9.5" cy="7.5" r="1" fill="#fff"/><circle cx="13" cy="7.5" r="1" fill="#fff"/></svg>
<div class="b" style="left:1644px;top:715px;width:36px;height:109px;border:1px solid #d4d4d4;border-top:none"></div>
<div class="b" style="left:1645px;top:788px;width:34px;height:1px;background:#d8d8d8"></div>
<svg class="b" style="left:1653px;top:723px" width="18" height="15" viewBox="0 0 18 15"><path d="M1.5 1 C3.5 0.5 6 0.5 8.3 1.5 V14 C6 13 3.5 13 1.5 13.5 Z M9.7 1.5 C12 0.5 14.5 0.5 16.5 1 V13.5 C14.5 13 12 13 9.7 14 Z" fill="#9a9a9a"/></svg>
<svg class="b" style="left:1649px;top:735px" width="33" height="28" viewBox="0 0 33 28"><path d="M2 7 L9 9 L12 2 L16 8 L23 3 L25 8 L33 6 V23 L26 21 L22 27 L17 22 L9 25 L9 19 L1 18 L5 13 Z" fill="#fbc6cc"/><text x="7" y="19" font-size="11" font-weight="bold" fill="#c8001a" font-family="Liberation Sans">点我加</text></svg>
<div class="t " style="left:1651px;top:762px;color:#999;font-size:14px">引导</div>
<svg class="b" style="left:1654px;top:770px" width="28" height="58" viewBox="1654 770 28 58"><path d="M1657.5 784.5 L1664 779 L1669 783.5 L1662.5 789 Z" fill="#e8141e"/><path d="M1670 800 C1666 798 1663 798 1664 801 C1666 803 1670 803 1672 802 Z" fill="#5ec81a"/><path d="M1682 776 C1676 777 1669 782 1668 792 C1668 800 1672 806 1682 808 Z" fill="#62cc1c"/><circle cx="1673" cy="774" r="1.8" fill="#62cc1c"/><path d="M1673 774 L1676 779" stroke="#62cc1c" stroke-width="1.2"/><path d="M1677 786 H1681 M1679 786 L1678 790" stroke="#222" stroke-width="1"/><path d="M1682 808 C1677 810 1675 816 1676 822 C1677 825 1680 826 1682 826 Z" fill="#fff" stroke="#888" stroke-width="1"/><path d="M1682 812 C1679 813 1678 817 1679 821 L1682 822 Z" fill="#5a2020"/><path d="M1661.5 815 V799 M1656.5 804 L1661.5 798.5 L1666.5 804" fill="none" stroke="#9a7088" stroke-width="3.5"/></svg>
<svg class="b" style="left:1630px;top:275px" width="52" height="85" viewBox="1630 275 52 85"><path d="M1669 289 C1667 285 1662 284 1658 285 C1648 288 1639 300 1639 314 C1639 326 1648 333 1658 334 C1659 340 1663 345 1672 346 L1680 346 L1680 284 C1676 284 1672 286 1669 289 Z" fill="#62c6f8" stroke="#1b8ad6" stroke-width="1.3"/><path d="M1656 313 C1655 320 1656 327 1660 333" fill="none" stroke="#1b8ad6" stroke-width="1.2"/><path d="M1662 296 C1668 290 1675 286 1680 285" fill="none" stroke="#1b8ad6" stroke-width="1.2"/><path d="M1659 334 C1659 326 1667 322 1671 327 C1674 332 1668 337 1670 340 C1673 343 1677 342 1680 341" fill="none" stroke="#1b8ad6" stroke-width="1.3"/><path d="M1678 322 C1679 330 1680 334 1680 338" fill="none" stroke="#1b8ad6" stroke-width="1.2"/><ellipse cx="1669.5" cy="310.5" rx="3.8" ry="2.2" fill="#f86a80"/><path d="M1673 304.5 C1675 307 1678 307 1680 305" fill="none" stroke="#1b5a9a" stroke-width="1.1"/><ellipse cx="1680" cy="349" rx="3" ry="2.5" fill="#62c6f8" stroke="#1b8ad6" stroke-width="1"/></svg>
<div class="chk" style="left:30px;top:882px"></div>
<div class="b" style="left:1070px;top:876px;width:160px;height:10px;border:1px solid #8ab4f0;background:#fff"></div>
<div class="b" style="left:1070px;top:876px;width:24px;height:10px;background:#2f7de1"></div>
<svg class="b" style="left:1070px;top:876px" width="160" height="7" viewBox="0 0 160 7"><path d="M5 7 L9 5 L13 3.5 L16 2.5 L17 5 L16 7 Z" fill="#fff"/><rect x="36" y="5" width="2" height="2" fill="#1a5cc8"/><rect x="62" y="5.5" width="1.5" height="1.5" fill="#1a5cc8"/><rect x="96" y="5.5" width="14" height="1.5" fill="#1a5cc8"/><circle cx="125" cy="7" r="2.5" fill="#b8b8b8"/><path d="M146 7 C147 5 148 4.5 150 4.5" stroke="#1a5cc8" stroke-width="1.4" fill="none"/></svg>
</body></html>
